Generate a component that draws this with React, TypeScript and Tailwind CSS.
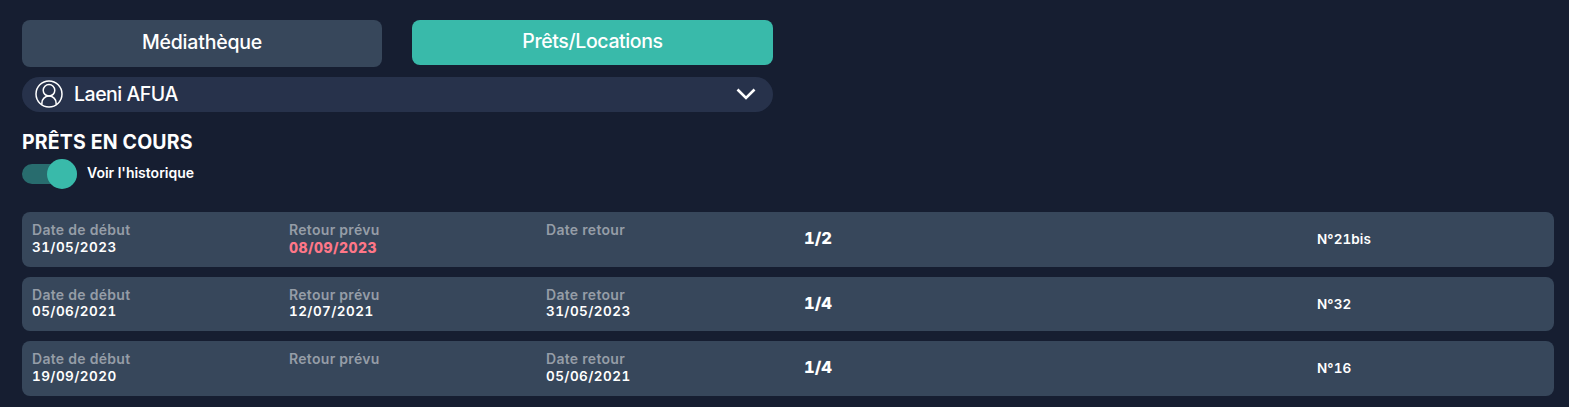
import React from "react";

type Loan = {
  start: string;
  due: string;
  returned: string;
  size: string;
  number: string;
  late?: boolean;
};

const loans: Loan[] = [
  { start: "31/05/2023", due: "08/09/2023", returned: "", size: "1/2", number: "N°21bis", late: true },
  { start: "05/06/2021", due: "12/07/2021", returned: "31/05/2023", size: "1/4", number: "N°32" },
  { start: "19/09/2020", due: "", returned: "05/06/2021", size: "1/4", number: "N°16" },
];

const DateCell = ({ label, value, late }: { label: string; value: string; late?: boolean }) => (
  <div className="-mt-px mb-px h-[34.66px] leading-[17.33px]">
    <div className="text-[14px] font-semibold tracking-[0.3px] text-[#959da7]">{label}</div>
    <div
      className={
        late
          ? "pt-[0.4px] text-[14px] font-extrabold tracking-[0.45px] tabular-nums text-[#ff7788]"
          : "pt-[0.4px] text-[13.5px] font-semibold tracking-[0.45px] tabular-nums"
      }
    >
      {value}
    </div>
  </div>
);

const LoanRow = ({ loan }: { loan: Loan }) => (
  <div className="grid grid-cols-6 gap-x-[30px] rounded-lg bg-[#37475b] p-2.5">
    <DateCell label="Date de début" value={loan.start} />
    <DateCell label="Retour prévu" value={loan.due} late={loan.late} />
    <DateCell label="Date retour" value={loan.returned} />
    <div className="pt-1.5 pl-px text-[16.5px] leading-5 font-extrabold tabular-nums">{loan.size}</div>
    <div />
    <div className="pt-[7px] text-[13.5px] leading-5 font-semibold tracking-[0.1px] tabular-nums">{loan.number}</div>
  </div>
);

const App = () => {
  return (
    <div className="h-[407px] bg-[#161e31] pt-5 pr-[15px] pl-[22px] font-['Inter',sans-serif] font-medium text-white">
      <div className="w-[751px]">
        <div className="grid grid-cols-[360px_361px] items-start gap-[30px]">
          <button className="h-[47px] rounded-lg bg-[#37475b] pb-px text-[19.5px] tracking-[-0.2px]">Médiathèque</button>
          <button className="h-[45px] rounded-lg bg-[#39baaa] pb-px text-[19.5px] tracking-[-0.38px]">Prêts/Locations</button>
        </div>

        <div className="mt-2.5 flex h-[35px] items-center rounded-full bg-[#27324b] pr-[17.5px] pb-px pl-[13px]">
          <svg className="size-7" viewBox="0 0 28 28" fill="none" stroke="currentColor" strokeWidth="1.5">
            <circle cx="14" cy="14" r="13" />
            <circle cx="14" cy="10.3" r="5.8" />
            <path d="M6.9 24.5v-1.4c0-3.9 3-7 7.1-7s7.1 3.1 7.1 7v1.4" />
          </svg>
          <span className="-mt-px ml-[11px] text-[19.5px] leading-7 tracking-[-0.48px]">Laeni AFUA</span>
          <svg className="ml-auto h-3 w-5" viewBox="0 0 20 12" fill="none" stroke="currentColor" strokeWidth="2.6">
            <path d="M1.5 1.5 10 10l8.5-8.5" />
          </svg>
        </div>
      </div>

      <h1 className="mt-[18px] text-[19.5px] leading-6 font-bold tracking-[0.17px]">PRÊTS EN COURS</h1>
      <div className="mt-[5px] flex h-[30px] items-center">
        <div className="flex h-5 w-[55px] items-center justify-end rounded-full bg-[#286c6e]">
          <span className="size-[30px] shrink-0 rounded-full bg-[#39baaa]" />
        </div>
        <span className="mb-0.5 ml-2.5 text-[14px] leading-5 font-semibold">Voir l'historique</span>
      </div>

      <div className="mt-[23px] flex flex-col gap-2.5">
        {loans.map((loan) => (
          <LoanRow key={loan.start} loan={loan} />
        ))}
      </div>
    </div>
  );
};

export default App;
